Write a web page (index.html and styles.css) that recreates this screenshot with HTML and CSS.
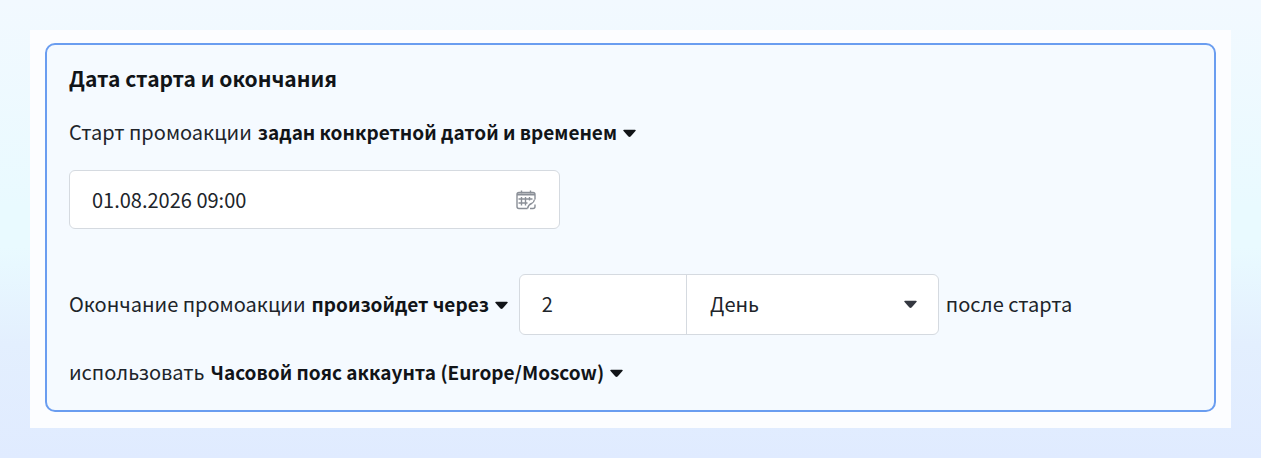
FILE: index.html
```
<!DOCTYPE html>
<html lang="ru">
<head>
<meta charset="utf-8">
<meta name="viewport" content="width=device-width, initial-scale=1">
<title>Дата старта и окончания</title>
<link rel="stylesheet" href="styles.css">
</head>
<body>
<main class="panel">
  <form class="card">
    <h2 class="card-title">Дата старта и окончания</h2>
    <div class="row row-start">
      <span class="label">Старт промоакции</span>
      <button type="button" class="picker">задан конкретной датой и временем
        <svg class="caret" viewBox="0 0 12 8" aria-hidden="true"><path d="M1 0.5h10q1.2 0.3 0.5 1.2L7 6.8q-1 0.8-2 0L0.5 1.7Q-0.2 0.8 1 0.5z"/></svg>
      </button>
    </div>
    <div class="date-field">
      <input class="date-input" type="text" value="01.08.2026 09:00" aria-label="Дата и время старта">
      <svg class="calendar" viewBox="0 0 20 20" aria-hidden="true">
        <path d="M5.5 0.5v3M14.5 0.5v3M1 16.500V4.500q0-2 2-2h14q2 0 2 2V9.500M1 16.500q0 2 2 2h8.500"/>
        <path class="calendar-head" d="M1 4.500h18"/>
        <path d="M5.500 7v8.500M9.500 7v8.500M13.500 7v3.500M2.500 9h14M2.500 13h9M18.500 9.500Q18 12.500 15.500 13.500Q12.500 14.500 11.500 18.500M19 14.500v2q0 2-2 2h-3"/>
      </svg>
    </div>
    <div class="row row-end">
      <span class="label">Окончание промоакции</span>
      <button type="button" class="picker">произойдет через
        <svg class="caret" viewBox="0 0 12 8" aria-hidden="true"><path d="M1 0.5h10q1.2 0.3 0.5 1.2L7 6.8q-1 0.8-2 0L0.5 1.7Q-0.2 0.8 1 0.5z"/></svg>
      </button>
      <div class="duration">
        <input class="amount" type="text" inputmode="numeric" value="2" aria-label="Количество">
        <div class="unit-field">
          <select class="unit" aria-label="Единица времени"><option>День</option></select>
          <svg class="caret unit-caret" viewBox="0 0 12 8" aria-hidden="true"><path d="M1 0.5h10q1.2 0.3 0.5 1.2L7 6.8q-1 0.8-2 0L0.5 1.7Q-0.2 0.8 1 0.5z"/></svg>
        </div>
      </div>
      <span class="label">после старта</span>
    </div>
    <div class="row row-zone">
      <span class="label">использовать</span>
      <button type="button" class="picker">Часовой пояс аккаунта (Europe/Moscow)
        <svg class="caret" viewBox="0 0 12 8" aria-hidden="true"><path d="M1 0.5h10q1.2 0.3 0.5 1.2L7 6.8q-1 0.8-2 0L0.5 1.7Q-0.2 0.8 1 0.5z"/></svg>
      </button>
    </div>
  </form>
</main>
</body>
</html>
```
FILE: styles.css
```
* {
  box-sizing: border-box;
}

body {
  min-height: 100vh;
  margin: 0;
  padding: 30px;
  background: linear-gradient(180deg, #f2f9ff 0%, #e9faff 45%, #e9faff 54%, #e3effe 75%, #e0ebff 100%);
  color: #20242a;
  font-family: "Noto Sans CJK SC", "Noto Sans", sans-serif;
  font-size: 20px;
  line-height: 30px;
}

button,
input,
select {
  margin: 0;
  color: inherit;
  font: inherit;
}

.panel {
  padding: 13px 15px 16px;
  background: #fcfdff;
}

.card {
  padding: 18px 22px 21px;
  border: 2px solid #6a9df0;
  border-radius: 10px;
  background: #f5faff;
}

.card-title {
  margin: 0 0 24px;
  color: #111418;
  font-size: 21px;
  font-weight: 700;
  line-height: 30px;
}

.row {
  display: flex;
  flex-wrap: wrap;
  align-items: center;
  gap: 6px;
}

.label,
.picker {
  padding: 0 0 2px;
}

.picker {
  display: flex;
  align-items: center;
  gap: 6px;
  border: 0;
  background: none;
  color: #111418;
  font-size: 19px;
  font-weight: 700;
  cursor: pointer;
}

.caret {
  flex: none;
  width: 13px;
  height: 9px;
  margin-top: 3px;
  fill: currentColor;
}

.date-field {
  display: grid;
  align-items: center;
  width: 491px;
  max-width: 100%;
  margin: 21px 0 45px;
}

.date-field > *,
.unit-field > * {
  grid-area: 1 / 1;
}

.date-input {
  width: 100%;
  height: 59px;
  padding: 0 60px 0 22px;
  border: 1px solid #d5dae0;
  border-radius: 6px;
  background: #fff;
}

.calendar {
  justify-self: end;
  width: 20px;
  height: 20px;
  margin-right: 24px;
  fill: none;
  stroke: #8a8f97;
  stroke-width: 1.4;
  pointer-events: none;
}

.calendar-head {
  stroke-width: 2;
}

.duration {
  display: flex;
  width: 420px;
  margin: 0 1px 0 5px;
  border: 1px solid #d5dae0;
  border-radius: 6px;
  background: #fff;
  overflow: hidden;
}

.amount {
  width: 40%;
  height: 59px;
  padding: 0 22px 2px;
  border: 0;
  border-right: 1px solid #d5dae0;
  background: none;
}

.unit-field {
  display: grid;
  flex: 1;
  align-items: center;
}

.unit {
  width: 100%;
  height: 59px;
  padding: 0 50px 2px 23px;
  border: 0;
  background: none;
  appearance: none;
}

.unit-caret {
  justify-self: end;
  margin: 0 21px 0 0;
  color: #343840;
  pointer-events: none;
}

.row-zone {
  margin-top: 22px;
}
```
